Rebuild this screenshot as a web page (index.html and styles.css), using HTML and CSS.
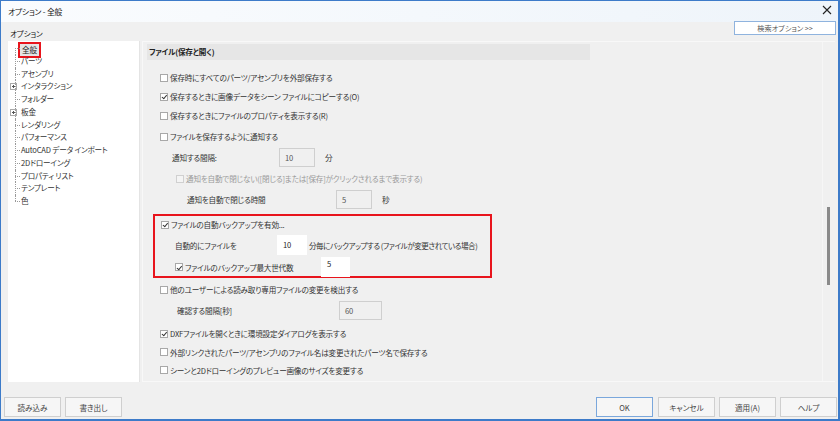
FILE: index.html
```html
<!DOCTYPE html>
<html lang="ja">
<head>
    <meta charset="UTF-8">
    <title>オプション - 全般</title>
    <link rel="stylesheet" href="styles.css">
</head>
<body>

<div class="window">
    <div class="titlebar">
        <span class="title">オプション - 全般</span>
        <span class="close">
            <svg width="10" height="10" viewBox="0 0 10 10"><path d="M1 1L9 9M9 1L1 9" stroke="#222" stroke-width="1.1"/></svg>
        </span>
    </div>

    <div class="toprow">
        <span class="tab-label">オプション</span>
        <button class="search-btn">検索オプション &gt;&gt;</button>
    </div>

    <div class="main">
        <!-- left tree -->
        <div class="tree">
            <div class="tree-item selected"><span class="sel-box">全般</span></div>
            <div class="tree-item">パーツ</div>
            <div class="tree-item">アセンブリ</div>
            <div class="tree-item expand">インタラクション</div>
            <div class="tree-item">フォルダー</div>
            <div class="tree-item expand">板金</div>
            <div class="tree-item">レンダリング</div>
            <div class="tree-item">パフォーマンス</div>
            <div class="tree-item">AutoCAD データ インポート</div>
            <div class="tree-item">2Dドローイング</div>
            <div class="tree-item">プロパティ リスト</div>
            <div class="tree-item">テンプレート</div>
            <div class="tree-item last">色</div>
        </div>

        <!-- right settings panel -->
        <div class="panel">
            <div class="panel-body">
                <div class="section-head">ファイル(保存と開く)</div>

                <div class="row r1"><span class="cb"></span>保存時にすべてのパーツ/アセンブリを外部保存する</div>
                <div class="row"><span class="cb checked"></span>保存するときに画像データをシーン ファイルにコピーする(O)</div>
                <div class="row"><span class="cb"></span>保存するときにファイルのプロパティを表示する(R)</div>
                <div class="row r4"><span class="cb"></span>ファイルを保存するように通知する</div>

                <div class="row field r5">
                    <span class="label w-notify">通知する間隔:</span>
                    <span class="input disabled w36">10</span>
                    <span class="unit">分</span>
                </div>
                <div class="row r6 dim"><span class="cb disabled"></span>通知を自動で閉じない([閉じる]または[保存]がクリックされるまで表示する)</div>
                <div class="row field r7">
                    <span class="label w-close">通知を自動で閉じる時間</span>
                    <span class="input disabled w36">5</span>
                    <span class="unit">秒</span>
                </div>

                <div class="highlight">
                    <div class="row h1"><span class="cb checked"></span>ファイルの自動バックアップを有効...</div>
                    <div class="row field h2">
                        <span class="label w-auto">自動的にファイルを</span>
                        <span class="input w30">10</span>
                        <span class="after">分毎にバックアップする (ファイルが変更されている場合)</span>
                    </div>
                    <div class="row field h3">
                        <span class="cb checked"></span><span class="label w-gen">ファイルのバックアップ最大世代数</span>
                        <span class="input w29 top">5</span>
                    </div>
                </div>

                <div class="row r8"><span class="cb"></span>他のユーザーによる読み取り専用ファイルの変更を検出する</div>
                <div class="row field r9">
                    <span class="label w-check">確認する間隔[秒]</span>
                    <span class="input disabled w43">60</span>
                </div>
                <div class="row r10"><span class="cb checked"></span>DXFファイルを開くときに環境設定ダイアログを表示する</div>
                <div class="row short"><span class="cb"></span>外部リンクされたパーツ/アセンブリのファイル名は変更されたパーツ名で保存する</div>
                <div class="row short"><span class="cb"></span>シーンと2Dドローイングのプレビュー画像のサイズを変更する</div>
            </div>
            <div class="scrollbar"><div class="thumb"></div></div>
        </div>
    </div>

    <div class="footer">
        <div class="btn-group">
            <button class="btn">読み込み</button>
            <button class="btn">書き出し</button>
        </div>
        <div class="btn-group">
            <button class="btn default">OK</button>
            <button class="btn">キャンセル</button>
            <button class="btn">適用(A)</button>
            <button class="btn">ヘルプ</button>
        </div>
    </div>
</div>

</body>
</html>
```

FILE: styles.css
```css
body {
    margin: 0;
    padding: 0;
    font-family: "Noto Sans CJK JP", "Noto Sans", sans-serif;
    font-feature-settings: "palt";
    font-size: 7.6px;
    letter-spacing: -0.2px;
    color: #333;
    background-color: #f0f0f0;
}

.window {
    box-sizing: border-box;
    width: 840px;
    height: 421px;
    border: 1px solid #3d7bc9;
    border-width: 0 2px 2px 1px;
    background-color: #f0f0f0;
    display: flex;
    flex-direction: column;
    overflow: hidden;
}

.titlebar {
    height: 21px;
    display: flex;
    justify-content: space-between;
    align-items: center;
    padding: 0 6px 0 7px;
    background: linear-gradient(to right, #fafcfe, #eef4fa);
    border-top: 1px solid #3d7bc9;
}

.title {
    font-size: 7.8px;
    color: #111;
}

.close {
    display: flex;
    margin-top: -3px;
}

.toprow {
    height: 19px;
    display: flex;
    justify-content: space-between;
    align-items: center;
    padding: 0 2px 0 9px;
}

.tab-label {
    color: #111;
    margin-top: 3px;
}

.search-btn {
    width: 102px;
    height: 14px;
    padding: 0;
    border: 1px solid #8fb3de;
    background-color: #fff;
    font-family: inherit;
    font-feature-settings: "palt";
    font-size: 7.2px;
    color: #555;
    margin-top: -7px;
}

.main {
    height: 341px;
    display: flex;
    gap: 2px;
    padding-left: 7px;
}

/* tree */
.tree {
    width: 131px;
    background-color: #fff;
    padding-top: 1px;
    border-right: 1px solid #e4e4e4;
}

.tree-item {
    position: relative;
    height: 12.75px;
    line-height: 12.75px;
    padding-left: 13px;
    color: #333;
    white-space: nowrap;
}

.tree-item::before {
    content: "";
    position: absolute;
    left: 7px;
    top: 6px;
    width: 5px;
    border-top: 1px dotted #999;
}

.tree-item::after {
    content: "";
    position: absolute;
    left: 7px;
    top: 0;
    height: 100%;
    border-left: 1px dotted #999;
}

.tree-item.selected::after {
    top: 6px;
    height: 7px;
}

.tree-item.last::after {
    height: 6px;
}

.tree-item.expand::before {
    left: 2px;
    top: 3px;
    width: 5px;
    height: 5px;
    border: 1px solid #aaa;
    background:
        linear-gradient(#555, #555) center / 3px 1px no-repeat,
        linear-gradient(#555, #555) center / 1px 3px no-repeat,
        #fff;
}

.sel-box {
    display: inline-block;
    height: 12px;
    line-height: 12px;
    padding: 0 2px;
    margin-left: -3px;
    border: 2px solid #e8141c;
    background-color: #e5e5e5;
    color: #222;
}

/* right panel */
.panel {
    flex: 1;
    display: flex;
    border: 1px solid #f8f8f8;
    border-right: none;
    margin-right: 3px;
}

.panel-body {
    flex: 1;
    padding-left: 4px;
    overflow: hidden;
}

.scrollbar {
    width: 12px;
    border-left: 1px solid #f6f6f6;
    position: relative;
}

.scrollbar .thumb {
    position: absolute;
    left: 4px;
    top: 165px;
    width: 3px;
    height: 78px;
    background-color: #8a8a8a;
}

.section-head {
    width: 441px;
    height: 16px;
    line-height: 16px;
    margin-top: 2px;
    padding-left: 2px;
    background-color: #e6e6e6;
    font-weight: bold;
    color: #222;
}

.row {
    height: 19px;
    display: flex;
    align-items: center;
    padding-left: 13px;
    white-space: nowrap;
    color: #333;
}

.row > * {
    flex-shrink: 0;
}

.row.r1 { margin-top: 8px; }
.row.r4 { margin-top: 2px; }
.row.r5 { margin-top: 1px; height: 21px; padding-left: 25px; }
.row.r6 { margin-top: 1px; padding-left: 29px; }
.row.r7 { margin-top: 1px; height: 21px; padding-left: 40px; }
.row.r8 { margin-top: 2px; }
.row.r9 { margin-top: 1px; height: 20px; padding-left: 30px; }
.row.r10 { margin-top: 4px; }
.row.short { height: 18px; }

.row.dim { color: #9a9a9a; }

.cb {
    box-sizing: border-box;
    width: 8px;
    height: 8px;
    border: 1px solid #a8a8a8;
    background-color: #fff;
    margin-right: 2px;
    position: relative;
}

.cb.checked::after {
    content: "";
    position: absolute;
    left: 1.5px;
    top: 0.5px;
    width: 2px;
    height: 3.5px;
    border: solid #333;
    border-width: 0 1px 1px 0;
    transform: rotate(40deg);
}

.cb.disabled {
    border-color: #d0d0d0;
    background-color: #f4f4f4;
}

.label {
    display: inline-block;
}

.w-notify { width: 107px; }
.w-close { width: 149px; }
.w-auto { width: 102px; }
.w-gen { width: 136px; }
.w-check { width: 162px; }

.input {
    box-sizing: border-box;
    height: 19px;
    line-height: 17px;
    padding-left: 5px;
    border: 1px solid #d2d2d2;
    background-color: #fff;
    color: #222;
}

.input.disabled {
    background-color: #f0f0f0;
    border-color: #cfcfcf;
    color: #555;
}

.input.top { line-height: 12px; }

.w36 { width: 36px; }
.w30 { width: 30px; height: 20px; border-color: #fff; }
.w29 { width: 29px; height: 20px; border-color: #fff; }
.w43 { width: 43px; }

.unit {
    margin-left: 10px;
}

.after {
    margin-left: 2px;
    letter-spacing: -0.5px;
}

.highlight {
    box-sizing: border-box;
    width: 339px;
    height: 64px;
    margin-top: 4px;
    margin-left: 6px;
    border: 2px solid #e8141c;
}

.highlight .row.h1 { height: 15px; margin-top: 1px; padding-left: 6px; }
.highlight .row.h2 { height: 22px; margin-top: 2px; padding-left: 20px; }
.highlight .row.h3 { height: 20px; margin-top: 1px; padding-left: 20px; }

/* footer */
.footer {
    flex: 1;
    display: flex;
    justify-content: space-between;
    align-items: flex-end;
    padding: 0 1px 2px 3px;
}

.btn-group {
    display: flex;
    gap: 4px;
}

.btn {
    width: 57px;
    height: 20px;
    padding: 0;
    border: 1px solid #cfcfcf;
    background-color: #f6f6f6;
    font-family: inherit;
    font-feature-settings: "palt";
    font-size: 7.6px;
    color: #444;
}

.btn.default {
    border-color: #7aa7dc;
    margin-right: 1px;
}
```
